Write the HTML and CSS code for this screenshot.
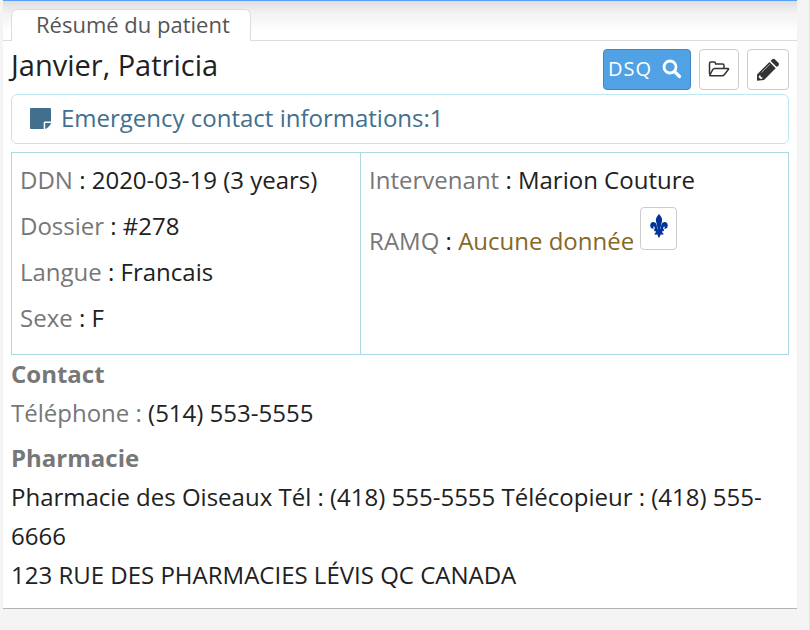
FILE: index.html
```html
<!DOCTYPE html>
<html lang="fr">
<head>
<meta charset="utf-8">
<title>Résumé du patient</title>
<link rel="stylesheet" href="styles.css">
</head>
<body>
<main class="card">
  <nav class="tabs"><a class="tab" href="#resume">Résumé du patient</a></nav>
  <section class="content" id="resume">
    <header class="head">
      <h1 class="name">Janvier, Patricia</h1>
      <div class="actions">
        <button class="btn btn-primary" type="button">DSQ
          <svg width="20" height="20" viewBox="0 0 20 20" fill="none" stroke="currentColor" aria-hidden="true"><circle cx="8" cy="8" r="6" stroke-width="2.800"/><path d="M12.500 12.500L17.500 17.500" stroke-width="3.200" stroke-linecap="round"/></svg>
        </button>
        <button class="btn btn-folder" type="button" aria-label="Ouvrir le dossier">
          <svg width="22" height="18" viewBox="0 0 22 18" fill="none" stroke="currentColor" stroke-width="1.500" stroke-linejoin="round" aria-hidden="true"><path d="M1.500 14V3.500Q1.500 2 3 2H6Q7.500 2 7.500 3.500V4H14.500Q16 4 16 5.500V8.500"/><path d="M6.500 8.500H20Q21 8.500 20.300 9.500L16.500 14.500Q15.500 15.800 14 15.800H2.300Q1.300 15.800 2 14.800L4.500 10Q5.500 8.500 6.500 8.500Z"/></svg>
        </button>
        <button class="btn btn-edit" type="button" aria-label="Modifier">
          <svg width="24" height="24" viewBox="0 0 24 24" fill="currentColor" aria-hidden="true"><path d="M13.500 4L19.700 10.200L8 22L1 22.800L1 16.500Z"/><path d="M14.600 2.900L16.500 1Q17.500 0.300 18.500 1L22.600 5.100Q23.400 6.200 22.600 7.300L20.800 9.100Z"/><path d="M5.500 14.500L14 6.200" stroke="#fff" stroke-width="0.600" fill="none"/><path d="M3 17.500L4.800 17.800V19.200H6.300L6.600 20.600L4.600 21L2.700 19.300Z" fill="#fff"/></svg>
        </button>
      </div>
    </header>
    <a class="notice" href="#contact">
      <svg width="21" height="21" viewBox="0 0 21 21" fill="currentColor" aria-hidden="true"><path d="M1 0H20Q21 0 21 1V13.500H15Q13.700 13.500 13.700 14.800V21H1Q0 21 0 20V1Q0 0 1 0Z"/><path d="M15.200 15H21Q20.800 16.500 19.500 17.800L17.800 19.500Q16.500 20.800 15.200 21Z"/></svg>
      <span>Emergency contact informations:1</span>
    </a>
    <div class="info">
      <dl class="col">
        <div class="row"><dt>DDN</dt> <dd>: 2020-03-19 (3 years)</dd></div>
        <div class="row"><dt>Dossier</dt> <dd>: #278</dd></div>
        <div class="row"><dt>Langue</dt> <dd>: Francais</dd></div>
        <div class="row"><dt>Sexe</dt> <dd>: F</dd></div>
      </dl>
      <dl class="col">
        <div class="row"><dt>Intervenant</dt> <dd>: Marion Couture</dd></div>
        <div class="row"><dt>RAMQ</dt> <dd>: <span class="missing">Aucune donnée</span>
          <button class="btn btn-ramq" type="button" aria-label="RAMQ">
            <svg width="18" height="24" viewBox="0 0 18 24" fill="currentColor" aria-hidden="true"><path d="M9 0C6.500 2.500 5.400 5 6 7.500C6.600 9.700 7.400 11.500 7.500 15H10.500C10.600 11.500 11.400 9.700 12 7.500C12.600 5 11.500 2.500 9 0Z"/><path d="M7.200 15.500C7.400 11.500 6.200 8 3.400 8C1 8 0 10 0.300 12C0.600 14.500 2.700 15.500 4 14.300C3 13.800 3 12.400 3.800 12.400C4.700 12.500 4.900 14 4.700 15.500Z"/><path d="M10.800 15.500C10.600 11.500 11.800 8 14.600 8C17 8 18 10 17.700 12C17.400 14.500 15.300 15.500 14 14.300C15 13.800 15 12.400 14.200 12.400C13.300 12.500 13.100 14 13.300 15.500Z"/><path d="M4.200 15H13.800V17.200H4.200Z"/><path d="M6 17C5.900 18.500 5.300 19.500 4 20C5.500 21 6.700 20.800 7.300 20.300C7.600 21.800 8.200 23 9 24C9.800 23 10.400 21.800 10.700 20.300C11.300 20.800 12.500 21 14 20C12.700 19.500 12.100 18.500 12 17Z"/></svg>
          </button></dd></div>
      </dl>
    </div>
    <section id="contact">
      <h2 class="title">Contact</h2>
      <p class="text phone"><span class="label">Téléphone :</span> (514) 553-5555</p>
    </section>
    <section>
      <h2 class="title">Pharmacie</h2>
      <p class="text">Pharmacie des Oiseaux Tél : (418) 555-5555 Télécopieur : (418) 555-6666<br>123 RUE DES PHARMACIES LÉVIS QC CANADA</p>
    </section>
  </section>
</main>
</body>
</html>
```
FILE: styles.css
```css
* { box-sizing: border-box; }
html { min-height: 100%; background: #f4f4f4; border-right: 1px solid #e4e4e4; }
body {
  margin: 0 12px 0 3px;
  color: #212121;
  font: 24px/38px "Open Sans", "Noto Sans", sans-serif;
}
h1, h2, p, dl, dd { margin: 0; }
.card {
  border-top: 1px solid #5a9ff5;
  border-bottom: 1px solid #b0b4b4;
  padding: 8px 0 14px;
  background: linear-gradient(#dedede, #f2f2f2 12px, #fff 30px) padding-box;
  box-shadow: 0 1px 1px #c4c6c6;
}
.tabs { display: flex; padding-left: 8px; border-bottom: 1px solid #dcdcdc; }
.tab {
  margin-bottom: -1px;
  padding: 0 20px 2px 24px;
  border: 1px solid #dcdcdc;
  border-bottom: 0;
  border-radius: 6px 6px 0 0;
  background: #fff;
  color: #555;
  font-size: 22px;
  line-height: 29px;
  text-decoration: none;
}
.content { padding: 0 8px; }
.head { display: flex; align-items: flex-start; justify-content: space-between; padding: 8px 0 4px; }
.name { font-size: 29px; font-weight: 400; line-height: 32px; }
.actions { display: flex; gap: 8px; }
.btn {
  display: inline-flex;
  align-items: center;
  justify-content: center;
  height: 41px;
  padding: 0;
  border: 1px solid #ccc;
  border-radius: 4px;
  background: #fff;
  color: #333;
}
.btn-primary {
  gap: 10px;
  width: 88px;
  padding: 0 4px 2px 0;
  border-color: #4285c4;
  background: #51a1e5;
  color: #fff;
  font: 20px/24px "Open Sans", sans-serif;
  letter-spacing: 1px;
}
.btn-folder { width: 40px; padding-bottom: 2px; }
.btn-edit { width: 42px; }
.notice {
  display: flex;
  align-items: center;
  gap: 10px;
  height: 50px;
  padding: 0 18px 2px;
  border: 1px solid #bce8f1;
  border-radius: 6px;
  color: #426f8d;
  text-decoration: none;
}
.info { display: grid; grid-template-columns: 349fr 429fr; margin-top: 8px; border: 1px solid #add8e6; }
.col { padding: 8px 8px 9px; }
.col + .col { border-left: 1px solid #add8e6; }
.row { margin-bottom: 8px; }
dt, dd { display: inline; }
dt, .label, .title { color: #777; }
.missing { color: #856827; }
.btn-ramq { width: 37px; height: 43px; padding-bottom: 6px; color: #003399; vertical-align: 12px; }
.title { font-size: 24px; font-weight: 700; line-height: 38px; }
.text { line-height: 39px; }
.phone { margin-bottom: 7px; }
```
